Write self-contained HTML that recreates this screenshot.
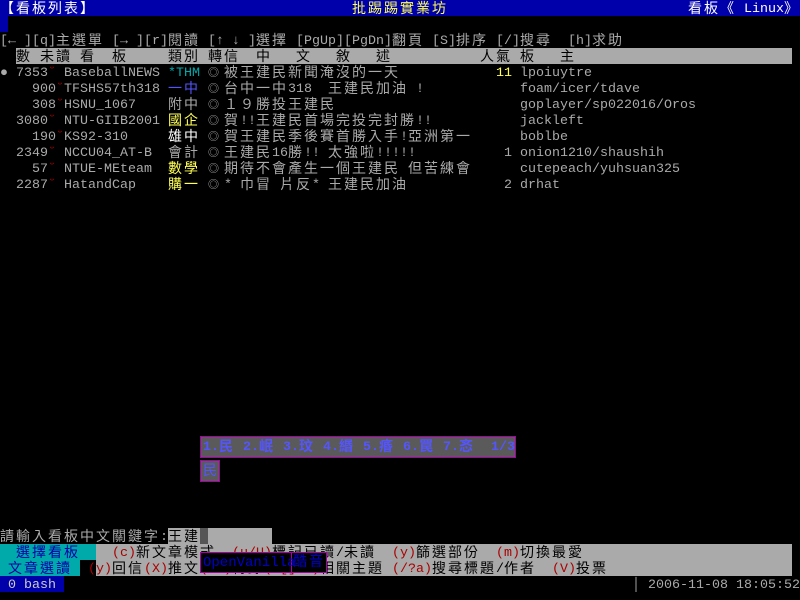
<!DOCTYPE html>
<html><head><meta charset="utf-8"><style>
html,body{margin:0;padding:0;background:#000;}
#s{position:relative;width:800px;height:600px;overflow:hidden;background:#000;font-family:"Liberation Mono","Noto Sans CJK TC",monospace;font-size:13.33px;color:#aaa;}
.t{position:absolute;height:16px;line-height:16px;white-space:pre;padding-top:2px;}
.t span{display:inline-block;vertical-align:top;height:16px;line-height:16px;}
.c{font-family:"Noto Sans CJK TC","WenQuanYi Zen Hei",sans-serif;font-size:14px;letter-spacing:2px;line-height:16px;position:relative;top:-2px;}
.b{position:absolute;}
.w{color:#fff}.y{color:#ff5}.r{color:#a00}.k{color:#000}.cy{color:#0aa}.bl{color:#55f}.db{color:#00a}
.o{font-size:11px;}
</style></head><body><div id="s">
<div class="b" style="left:0;top:0;width:800px;height:16px;background:#0000aa"></div>
<div class="t w" style="left:0;top:0"><span class="c">【看板列表】</span></div>
<div class="t y" style="left:352px;top:0"><span class="c">批踢踢實業坊</span></div>
<div class="t w" style="left:688px;top:0"><span class="c">看板《</span> Linux<span class="c">》</span></div>
<div class="b" style="left:0;top:16px;width:8px;height:16px;background:#0000aa"></div>

<div class="t" style="left:0;top:32px">[← ]</div>
<div class="t" style="left:32px;top:32px">[q]<span class="c">主選單</span></div>
<div class="t" style="left:112px;top:32px">[→ ]</div>
<div class="t" style="left:144px;top:32px">[r]<span class="c">閱讀</span></div>
<div class="t" style="left:208px;top:32px">[↑ ↓ ]</div>
<div class="t" style="left:256px;top:32px"><span class="c">選擇</span></div>
<div class="t" style="left:296px;top:32px">[PgUp]</div>
<div class="t" style="left:344px;top:32px">[PgDn]<span class="c">翻頁</span></div>
<div class="t" style="left:432px;top:32px">[S]<span class="c">排序</span></div>
<div class="t" style="left:496px;top:32px">[/]<span class="c">搜尋</span></div>
<div class="t" style="left:568px;top:32px">[h]<span class="c">求助</span></div>

<div class="b" style="left:16px;top:48px;width:776px;height:16px;background:#aaa"></div>
<div class="t k" style="left:16px;top:48px"><span class="c">數</span></div>
<div class="t k" style="left:40px;top:48px"><span class="c">未讀</span></div>
<div class="t k" style="left:80px;top:48px"><span class="c">看</span></div>
<div class="t k" style="left:112px;top:48px"><span class="c">板</span></div>
<div class="t k" style="left:168px;top:48px"><span class="c">類別</span></div>
<div class="t k" style="left:208px;top:48px"><span class="c">轉信</span></div>
<div class="t k" style="left:256px;top:48px"><span class="c">中</span></div>
<div class="t k" style="left:296px;top:48px"><span class="c">文</span></div>
<div class="t k" style="left:336px;top:48px"><span class="c">敘</span></div>
<div class="t k" style="left:376px;top:48px"><span class="c">述</span></div>
<div class="t k" style="left:480px;top:48px"><span class="c">人氣</span></div>
<div class="t k" style="left:520px;top:48px"><span class="c">板</span></div>
<div class="t k" style="left:560px;top:48px"><span class="c">主</span></div>

<div class="t" style="left:0;top:64px">●</div>
<div class="t" style="left:16px;top:64px">7353<span class="r">˘</span></div>
<div class="t" style="left:64px;top:64px">BaseballNEWS</div>
<div class="t cy" style="left:168px;top:64px">*THM</div>
<div class="t o" style="left:208px;top:64px">◎</div>
<div class="t" style="left:224px;top:64px"><span class="c">被王建民新聞淹沒的一天</span></div>
<div class="t y" style="left:496px;top:64px">11</div>
<div class="t" style="left:520px;top:64px">lpoiuytre</div>

<div class="t" style="left:24px;top:80px"> 900<span class="r">˘</span></div>
<div class="t" style="left:64px;top:80px">TFSHS57th318</div>
<div class="t bl" style="left:168px;top:80px"><span class="c">一中</span></div>
<div class="t o" style="left:208px;top:80px">◎</div>
<div class="t" style="left:224px;top:80px"><span class="c">台中一中</span>318  <span class="c">王建民加油</span> !</div>
<div class="t" style="left:520px;top:80px">foam/icer/tdave</div>

<div class="t" style="left:24px;top:96px"> 308<span class="r">˘</span></div>
<div class="t" style="left:64px;top:96px">HSNU_1067</div>
<div class="t" style="left:168px;top:96px"><span class="c">附中</span></div>
<div class="t o" style="left:208px;top:96px">◎</div>
<div class="t" style="left:224px;top:96px"><span class="c">１９勝投王建民</span></div>
<div class="t" style="left:520px;top:96px">goplayer/sp022016/Oros</div>

<div class="t" style="left:16px;top:112px">3080<span class="r">˘</span></div>
<div class="t" style="left:64px;top:112px">NTU-GIIB2001</div>
<div class="t y" style="left:168px;top:112px"><span class="c">國企</span></div>
<div class="t o" style="left:208px;top:112px">◎</div>
<div class="t" style="left:224px;top:112px"><span class="c">賀</span>!!<span class="c">王建民首場完投完封勝</span>!!</div>
<div class="t" style="left:520px;top:112px">jackleft</div>

<div class="t" style="left:24px;top:128px"> 190<span class="r">˘</span></div>
<div class="t" style="left:64px;top:128px">KS92-310</div>
<div class="t w" style="left:168px;top:128px"><span class="c">雄中</span></div>
<div class="t o" style="left:208px;top:128px">◎</div>
<div class="t" style="left:224px;top:128px"><span class="c">賀王建民季後賽首勝入手</span>!<span class="c">亞洲第一</span></div>
<div class="t" style="left:520px;top:128px">boblbe</div>

<div class="t" style="left:16px;top:144px">2349<span class="r">˘</span></div>
<div class="t" style="left:64px;top:144px">NCCU04_AT-B</div>
<div class="t" style="left:168px;top:144px"><span class="c">會計</span></div>
<div class="t o" style="left:208px;top:144px">◎</div>
<div class="t" style="left:224px;top:144px"><span class="c">王建民</span>16<span class="c">勝</span>!! <span class="c">太強啦</span>!!!!!</div>
<div class="t" style="left:504px;top:144px">1</div>
<div class="t" style="left:520px;top:144px">onion1210/shaushih</div>

<div class="t" style="left:32px;top:160px">57<span class="r">˘</span></div>
<div class="t" style="left:64px;top:160px">NTUE-MEteam</div>
<div class="t y" style="left:168px;top:160px"><span class="c">數學</span></div>
<div class="t o" style="left:208px;top:160px">◎</div>
<div class="t" style="left:224px;top:160px"><span class="c">期待不會產生一個王建民</span> <span class="c">但苦練會</span></div>
<div class="t" style="left:520px;top:160px">cutepeach/yuhsuan325</div>

<div class="t" style="left:16px;top:176px">2287<span class="r">˘</span></div>
<div class="t" style="left:64px;top:176px">HatandCap</div>
<div class="t y" style="left:168px;top:176px"><span class="c">購一</span></div>
<div class="t o" style="left:208px;top:176px">◎</div>
<div class="t" style="left:224px;top:176px">* <span class="c">巾冒</span> <span class="c">片反</span>* <span class="c">王建民加油</span></div>
<div class="t" style="left:504px;top:176px">2</div>
<div class="t" style="left:520px;top:176px">drhat</div>

<div class="t" style="left:0;top:528px"><span class="c">請輸入看板中文關鍵字</span>:</div>
<div class="b" style="left:168px;top:528px;width:104px;height:16px;background:#aaa"></div>
<div class="b" style="left:200px;top:528px;width:8px;height:16px;background:#555"></div>
<div class="t k" style="left:168px;top:528px"><span class="c">王建</span></div>

<div class="b" style="left:0;top:544px;width:96px;height:16px;background:#0aa"></div>
<div class="b" style="left:96px;top:544px;width:696px;height:32px;background:#aaa"></div>
<div class="b" style="left:0;top:560px;width:80px;height:16px;background:#0aa"></div>
<div class="t db" style="left:16px;top:544px"><span class="c">選擇看板</span></div>
<div class="t db" style="left:8px;top:560px"><span class="c">文章選讀</span></div>
<div class="t k" style="left:112px;top:544px"><span class="r">(c)</span><span class="c">新文章模式</span>  <span class="r">(u/U)</span><span class="c">標記已讀</span>/<span class="c">未讀</span>  <span class="r">(y)</span><span class="c">篩選部份</span>  <span class="r">(m)</span><span class="c">切換最愛</span></div>
<div class="t k" style="left:88px;top:560px"><span class="r">(y)</span><span class="c">回信</span><span class="r">(X)</span><span class="c">推文</span><span class="r">(^X)</span><span class="c">轉錄</span><span class="r">(=[]&lt;&gt;)</span><span class="c">相關主題</span> <span class="r">(/?a)</span><span class="c">搜尋標題</span>/<span class="c">作者</span>  <span class="r">(V)</span><span class="c">投票</span></div>

<div class="b" style="left:0;top:576px;width:64px;height:16px;background:#0000aa"></div>
<div class="t" style="left:8px;top:576px;color:#ccc">0 bash</div>
<div class="t" style="left:632px;top:576px">│ 2006-11-08 18:05:52</div>

<div class="b" style="left:200px;top:436px;width:314px;height:20px;background:#5a5a5a;border:1px solid #a0a"></div>
<div class="t bl" style="left:203px;top:438px;font-weight:bold">1.<span class="c">民</span> 2.<span class="c">岷</span> 3.<span class="c">玟</span> 4.<span class="c">緡</span> 5.<span class="c">痻</span> 6.<span class="c">罠</span> 7.<span class="c">忞</span>  1/3</div>
<div class="b" style="left:200px;top:460px;width:18px;height:20px;background:#5a5a5a;border:1px solid #a0a"></div>
<div class="t bl" style="left:203px;top:462px"><span class="c">民</span></div>
<div class="b" style="left:200px;top:552px;width:91px;height:19px;background:#000;border:1px solid #a0a"></div>
<div class="b" style="left:291px;top:552px;width:34px;height:19px;background:#000;border:1px solid #a0a"></div>
<div class="t" style="left:203px;top:553px;color:#00c;font-size:14px">OpenVanilla</div>
<div class="t" style="left:293px;top:553px;color:#00c"><span class="c">酷音</span></div>
</div></body></html>
